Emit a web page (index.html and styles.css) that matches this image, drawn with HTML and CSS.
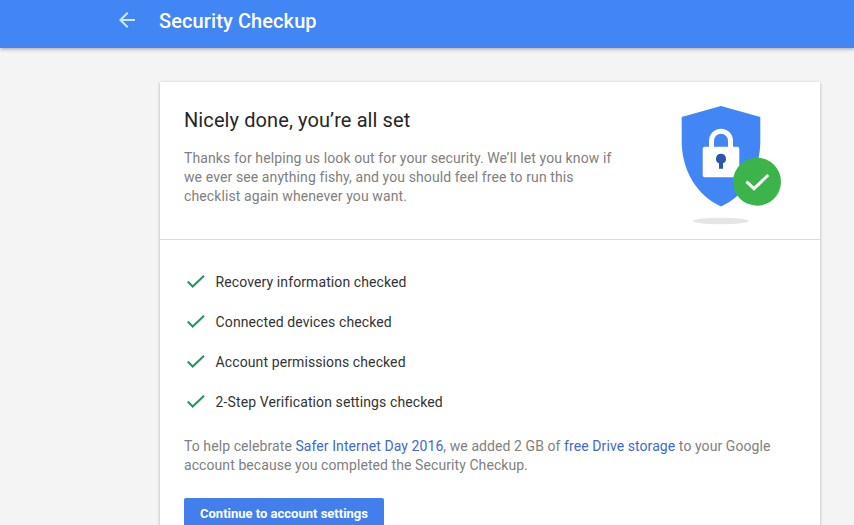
FILE: index.html
```html
<!DOCTYPE html>
<html lang="en">
<head>
<meta charset="utf-8">
<title>Security Checkup</title>
<link rel="stylesheet" href="styles.css">
</head>
<body>
<header class="topbar">
  <svg class="back" viewBox="0 0 24 24" width="24" height="24"><path d="M20 11H7.830l5.590-5.590L12 4l-8 8 8 8 1.410-1.410L7.830 13H20z"/></svg>
  <h1>Security Checkup</h1>
</header>
<main class="card">
  <section class="hero">
    <div class="copy">
      <h2>Nicely done, you’re all set</h2>
      <p>Thanks for helping us look out for your security. We’ll let you know if<br>we ever see anything fishy, and you should feel free to run this<br>checklist again whenever you want.</p>
    </div>
    <svg class="shield" viewBox="0 0 102 120" width="102" height="120">
      <ellipse class="shadow" cx="40.700" cy="115" rx="28" ry="3.200"/>
      <path class="body" d="M41 0 80.300 11V35C80.300 66 64 90 41 100.500C18 90 1.700 66 1.700 35V11Z"/>
      <path class="shackle" d="M31.500 43V34.700a9.500 9.500 0 0 1 19 0V43"/>
      <rect class="lock" x="22.700" y="40.700" width="36.600" height="30.600" rx="2"/>
      <path class="key" d="M41 47.700a5 5 0 0 0-2 9.580V62.700h4V57.280A5 5 0 0 0 41 47.700z"/>
      <circle class="badge" cx="77" cy="75.700" r="24"/>
      <path class="tick" d="M66.500 75.700l7.500 7L88.200 69"/>
    </svg>
  </section>
  <section class="details">
    <ul class="checks">
      <li><svg viewBox="0 0 20 16" width="20" height="16"><path d="M1.700 7.500l5 5L18 1.700"/></svg><span>Recovery information checked</span></li>
      <li><svg viewBox="0 0 20 16" width="20" height="16"><path d="M1.700 7.500l5 5L18 1.700"/></svg><span>Connected devices checked</span></li>
      <li><svg viewBox="0 0 20 16" width="20" height="16"><path d="M1.700 7.500l5 5L18 1.700"/></svg><span>Account permissions checked</span></li>
      <li><svg viewBox="0 0 20 16" width="20" height="16"><path d="M1.700 7.500l5 5L18 1.700"/></svg><span>2-Step Verification settings checked</span></li>
    </ul>
    <p>To help celebrate <a>Safer Internet Day 2016</a>, we added 2 GB of <a>free Drive storage</a> to your Google<br>account because you completed the Security Checkup.</p>
    <button class="continue">Continue to account settings</button>
  </section>
</main>
</body>
</html>
```
FILE: styles.css
```css
* { box-sizing: border-box; }
body { margin: 0; height: 100vh; display: flex; flex-direction: column; overflow: hidden; background: #f4f4f4; font-family: Roboto, sans-serif; letter-spacing: .1px; }
.topbar { flex: none; height: 48px; display: flex; align-items: center; padding: 0 0 7px 115px; background: #4285f4; box-shadow: 0 1px 4px rgba(0,0,0,.35); color: #fff; }
.back { fill: #cdeafe; margin: -2px 20px 0 0; }
h1 { margin: 0; font-size: 20px; font-weight: 500; line-height: 24px; white-space: nowrap; }
.card { flex: 1; min-height: 0; width: 660px; margin: 34px 0 0 160px; background: #fff; box-shadow: 0 1px 3px rgba(0,0,0,.3); }
.hero { height: 158px; border-bottom: 1px solid #dcdcdc; display: flex; padding: 24px 0 0 24px; }
.copy { width: 496px; }
h2 { margin: 0; font-size: 20px; font-weight: 400; line-height: 28px; color: #262626; }
p { margin: 0; font-size: 14px; line-height: 19px; color: #808080; white-space: nowrap; }
.copy p { margin-top: 15px; }
.shield { flex: none; }
.shadow { fill: #e5e5e5; }
.body { fill: #4285f4; }
.shackle { fill: none; stroke: #fff; stroke-width: 5; }
.lock { fill: #fff; }
.key { fill: #2a56b0; }
.badge { fill: #3bb54a; }
.tick { fill: none; stroke: #fff; stroke-width: 3; }
.details { padding: 22px 24px 0; }
.details p { letter-spacing: .08px; }
.checks { list-style: none; margin: 0 0 15px; padding: 0; }
.checks li { height: 40px; display: flex; align-items: center; gap: 10px; padding-left: 2px; font-size: 14px; color: #333; }
.checks span { margin-left: -.4px; }
.checks path { fill: none; stroke: #249561; stroke-width: 2; }
a { color: #4268d0; }
.continue { display: block; width: 200px; height: 27px; margin-top: 23px; border: 0; border-radius: 2px 2px 0 0; padding: 4px 0 0; background: #427fed; color: #fff; font: 700 13px/15px Roboto, sans-serif; }
```
